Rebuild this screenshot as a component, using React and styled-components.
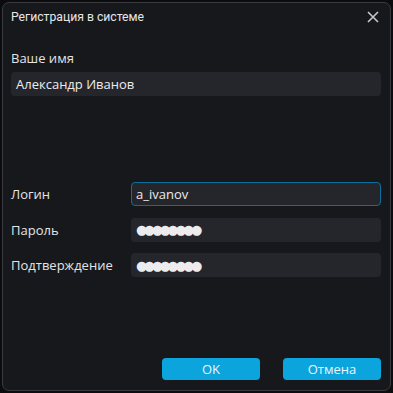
import React from 'react';
import styled, { createGlobalStyle } from 'styled-components';

const Global = createGlobalStyle`
  html, body { margin: 0; padding: 0; background: #0c0c0e; }
  body { font-family: "Open Sans", "Noto Sans", sans-serif; }
`;

const Window = styled.div`
  box-sizing: border-box;
  margin: 2px;
  width: 389px;
  height: 389px;
  background: #17181c;
  border: 1px solid #393a3f;
  border-radius: 7px;
  display: flex;
  flex-direction: column;
  padding: 0 9px 10px 8px;
  color: #e4e4e6;
  font-size: 13px;
`;

const TitleBar = styled.div`
  height: 28px;
  display: flex;
  align-items: center;
  justify-content: space-between;
`;

const Title = styled.span`
  font-family: Roboto, "Noto Sans", sans-serif;
  font-size: 12.2px;
  color: #e6e6e8;
`;

const Close = styled.svg`
  width: 12px;
  height: 12px;
  margin-right: 2px;
`;

const Label = styled.div`
  height: ${p => (p.$short ? '18px' : '24px')};
  display: flex;
  align-items: center;
  color: #e4e4e6;
`;

const Field = styled.div`
  box-sizing: border-box;
  height: 24px;
  border-radius: 4px;
  background: #25262b;
  display: flex;
  align-items: center;
  padding: 0 4px;
  border: 1px solid ${p => (p.$focus ? '#0b6f9c' : 'transparent')};
  color: #ececee;
  font-family: ${p => (p.$mask ? '"DejaVu Sans", sans-serif' : 'inherit')};
  font-size: 13px;
  letter-spacing: ${p => (p.$mask ? '-3.5px' : '0')};
`;

const NameBlock = styled.div`
  margin-top: 18px;
  display: flex;
  flex-direction: column;
  gap: 5px;
`;

const Form = styled.div`
  margin-top: 86px;
  display: grid;
  grid-template-columns: 120px 1fr;
  row-gap: 11.5px;
`;

const Footer = styled.div`
  margin-top: auto;
  display: flex;
  justify-content: flex-end;
  gap: 23px;
`;

const Button = styled.button`
  width: 98px;
  height: 22px;
  border: none;
  border-radius: 4px;
  background: #0ba4dc;
  color: #eaf6fc;
  font-family: "Open Sans", "Noto Sans", sans-serif;
  font-size: 13px;
  padding: 0;
`;

export default function App() {
  return (
    <>
      <Global />
      <Window>
        <TitleBar>
          <Title>Регистрация в системе</Title>
          <Close viewBox="0 0 12 12">
            <path d="M1 1 L11 11 M11 1 L1 11" stroke="#c8c8cc" strokeWidth="1.6" />
          </Close>
        </TitleBar>
        <NameBlock>
          <Label $short>Ваше имя</Label>
          <Field>Александр Иванов</Field>
        </NameBlock>
        <Form>
          <Label>Логин</Label>
          <Field $focus>a_ivanov</Field>
          <Label>Пароль</Label>
          <Field $mask>●●●●●●●●</Field>
          <Label>Подтверждение</Label>
          <Field $mask>●●●●●●●●</Field>
        </Form>
        <Footer>
          <Button>OK</Button>
          <Button>Отмена</Button>
        </Footer>
      </Window>
    </>
  );
}
